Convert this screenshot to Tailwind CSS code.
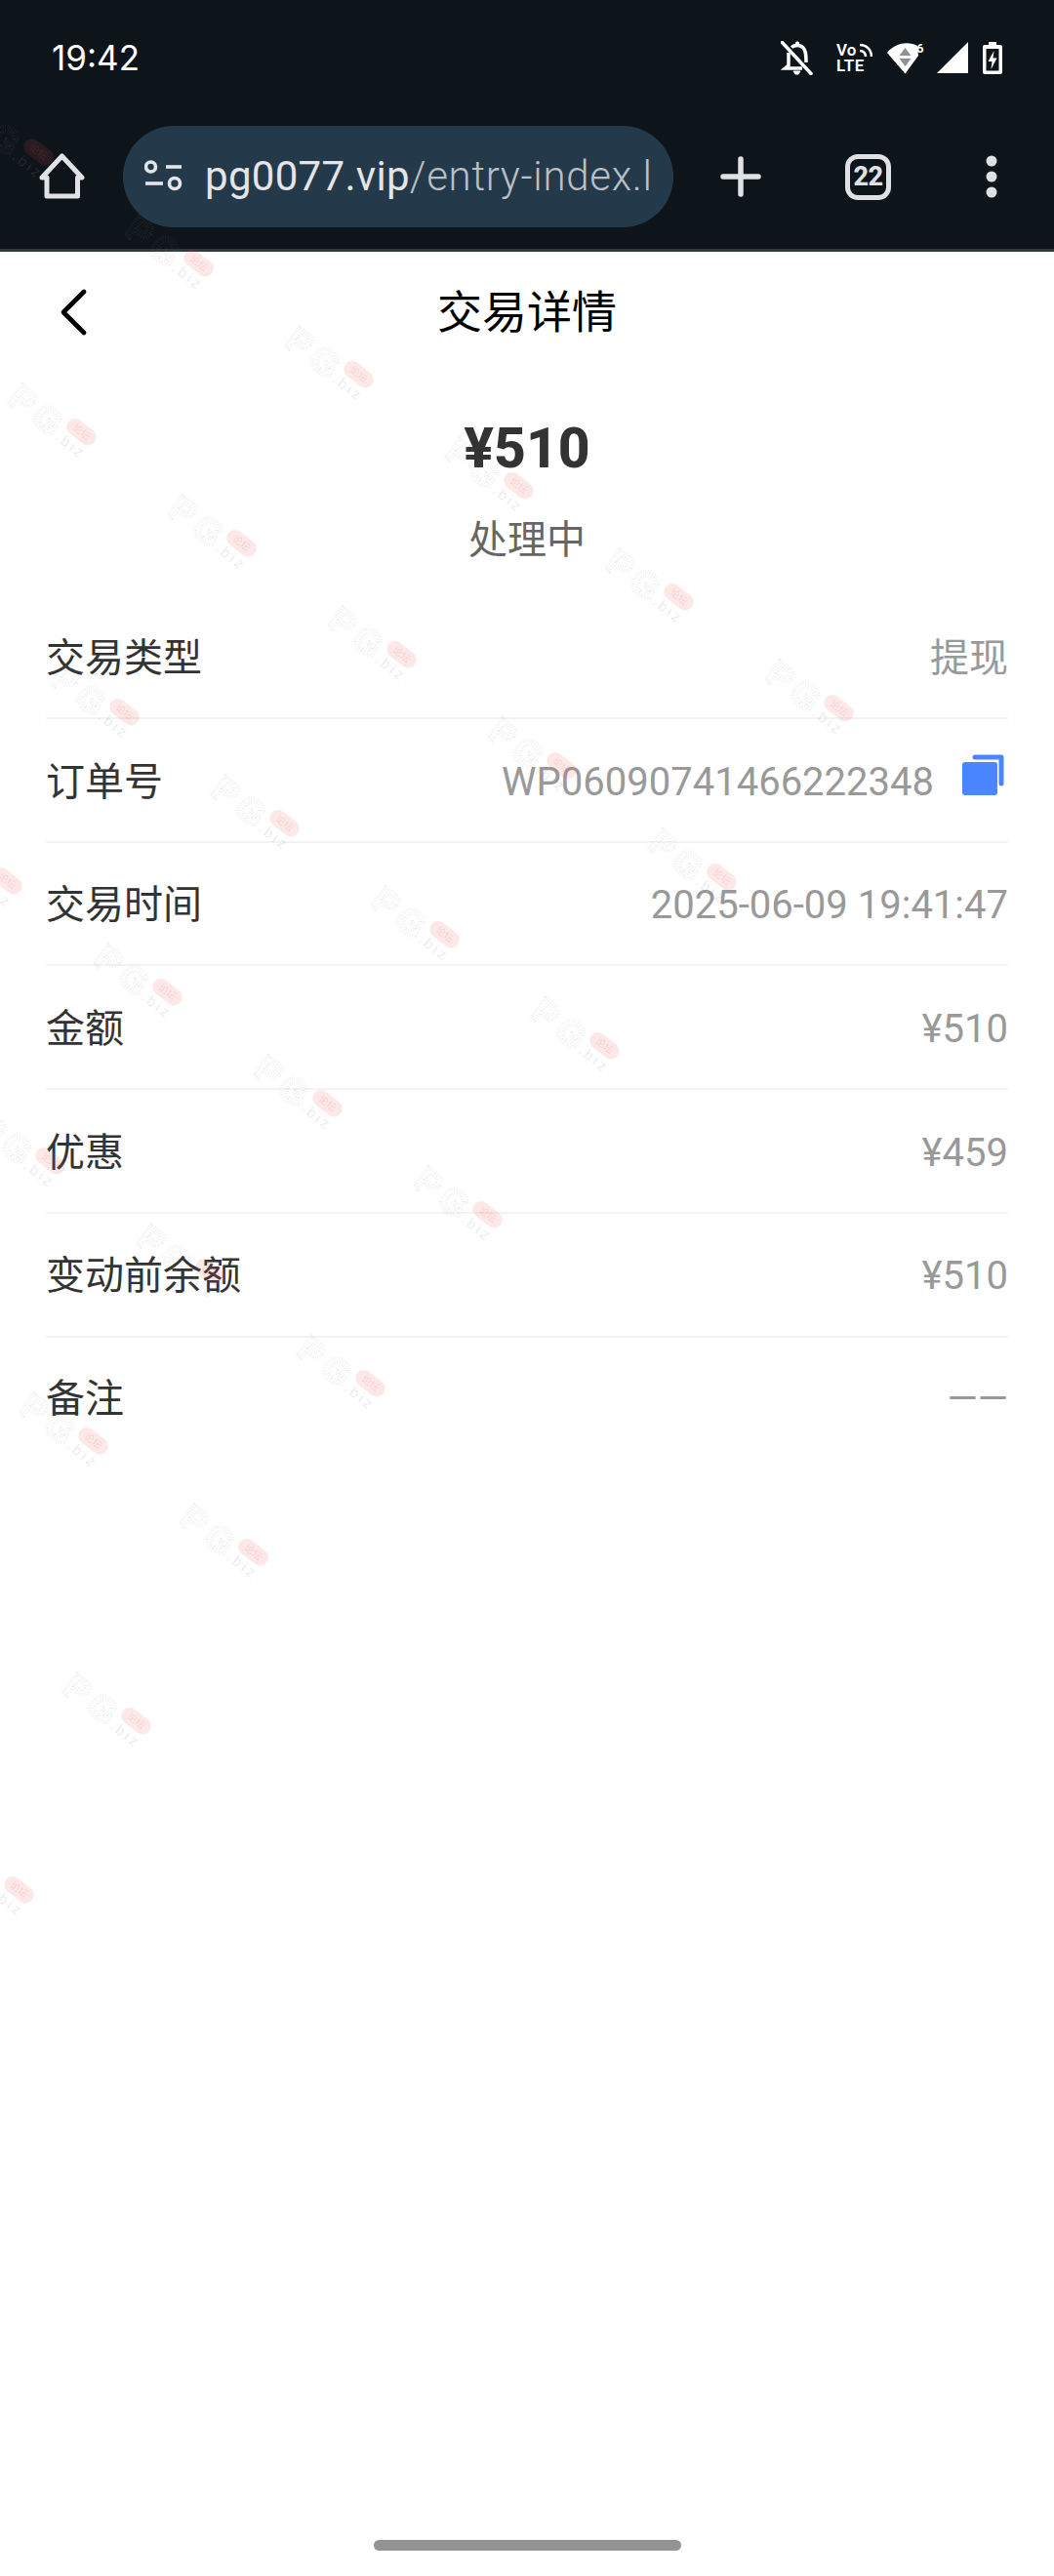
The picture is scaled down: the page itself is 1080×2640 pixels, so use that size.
<!DOCTYPE html>
<html lang="zh-CN">
<head>
    <meta charset="UTF-8">
    <meta name="viewport" content="width=device-width, initial-scale=1.0">
    <title>交易详情</title>
    <script src="https://cdn.jsdelivr.net/npm/@tailwindcss/browser@4"></script>
</head>
<body class="bg-white">
    <div class="relative flex flex-col w-[1080px] h-[2640px] overflow-hidden bg-white text-[#333] font-['Roboto','Noto_Sans_CJK_SC',sans-serif]">

        <!-- browser chrome -->
        <header class="h-[258px] shrink-0 bg-[#0d141a] border-b-[3px] border-[#33383c]">
            <div class="flex items-center h-[118px] pl-[53px] pr-[53px]">
                <span class="text-[35px] leading-none text-white font-['Inter',sans-serif]">19:42</span>
                <div class="ml-auto flex items-center">
                    <svg class="w-[33px] h-[35px]" viewBox="0 0 33 35" fill="none" stroke="#fff">
                        <path d="M1.5 1.5 L31 33.5" stroke-width="3.5" stroke-linecap="round"/>
                        <path d="M8 12 V25 L4.5 28 H22" stroke-width="3.5"/>
                        <path d="M11 6.5 C14 4 20 3.5 23 7 C25.5 9.5 26 13 26 22" stroke-width="3.5"/>
                        <path d="M15 4 L16 1 H18 L19 4 Z M13 31 H20 L18 34 H15 Z" fill="#fff" stroke-width="1"/>
                    </svg>
                    <div class="relative ml-[24px] w-[37px] h-[33px] text-white font-semibold text-[17px] leading-[16px]">
                        <div>Vo</div>
                        <div class="tracking-[0.5px]">LTE</div>
                        <svg class="absolute right-0 top-[1px] w-[14px] h-[14px]" viewBox="0 0 14 14" fill="none" stroke="#fff" stroke-width="2.6">
                            <path d="M1 2 C8 2 13 7 13 14"/>
                            <path d="M1 8 C4.5 8 7 10.5 7 14"/>
                        </svg>
                    </div>
                    <svg class="ml-[15px] w-[38px] h-[33px]" viewBox="0 0 38 33">
                        <path d="M0 11 C8 1 22 -1 31 4 L32 14 L18.5 32.5 Z" fill="#fff"/>
                        <path d="M18.5 6 L24.5 14 H12.5 Z M12.5 17 H24.5 L18.5 25 Z" fill="#8d9094"/>
                        <text x="30" y="11" font-size="13" font-weight="700" fill="#fff">6</text>
                    </svg>
                    <svg class="ml-[13px] w-[32px] h-[32px]" viewBox="0 0 32 32"><path d="M32 0 V32 H0 Z" fill="#fff"/></svg>
                    <svg class="ml-[15px] w-[20px] h-[33px]" viewBox="0 0 20 33">
                        <path d="M6 0 H14 V3 H18 Q20 3 20 5 V31 Q20 33 18 33 H2 Q0 33 0 31 V5 Q0 3 2 3 H6 Z" fill="#fff"/>
                        <path d="M3.5 7 H16.5 V29.5 H3.5 Z" fill="#0d141a"/>
                        <path d="M11.5 9 L5.5 20 H9.5 L8.5 28 L14.5 16.5 H10.5 Z" fill="#fff"/>
                    </svg>
                </div>
            </div>
            <div class="flex items-center h-[104px] mt-[11px] pl-[40px]">
                <svg class="w-[48px] h-[48px] shrink-0" viewBox="0 0 48 48" fill="none" stroke="#e0e2e6" stroke-width="5" stroke-linejoin="round">
                    <path d="M3 25 L23.5 3 L44 25 H39.5 V44 H8 V25 Z"/>
                </svg>
                <div class="flex items-center ml-[38px] w-[564px] h-[104px] pl-[22px] rounded-full bg-[#243a4a] shrink-0">
                    <svg class="w-[40px] h-[36px] shrink-0" viewBox="0 0 40 36" fill="none" stroke="#e3e5e8" stroke-width="3.6">
                        <circle cx="6.5" cy="8" r="5"/>
                        <path d="M22 8 H38"/>
                        <path d="M1 25 H19"/>
                        <circle cx="31" cy="25" r="5.5"/>
                    </svg>
                    <div class="ml-[22px] whitespace-nowrap text-[42px] font-light leading-none text-[#b9bfc6]"><span class="font-normal tracking-[0.3px] text-[#e3e5e8]">pg0077.vip</span><span class="tracking-[0.7px]">/entry-index.l</span></div>
                </div>
                <svg class="ml-[48px] w-[42px] h-[42px] shrink-0" viewBox="0 0 42 42" fill="none" stroke="#dfe1e5" stroke-width="5.5" stroke-linecap="round">
                    <path d="M21 3 V39 M3 21 H39"/>
                </svg>
                <div class="ml-[86px] flex items-center justify-center w-[47px] h-[47px] shrink-0 rounded-[13px] border-[5px] border-[#dfe1e5] text-[27px] font-extrabold tracking-[-0.5px] leading-none text-[#dfe1e5]">22</div>
                <svg class="ml-[97px] w-[12px] h-[44px] shrink-0" viewBox="0 0 12 44" fill="#dfe1e5">
                    <circle cx="6" cy="6" r="5.5"/>
                    <circle cx="6" cy="22" r="5.5"/>
                    <circle cx="6" cy="38" r="5.5"/>
                </svg>
            </div>
        </header>

        <!-- page title -->
        <div class="relative flex items-center justify-center h-[124px] shrink-0">
            <svg class="absolute left-[62px] top-[38px] w-[27px] h-[48px]" viewBox="0 0 27 48" fill="none" stroke="#000" stroke-width="4.6" stroke-linecap="round" stroke-linejoin="round">
                <path d="M24 3 L3 24 L24 45"/>
            </svg>
            <h1 class="text-[46px] leading-none text-black">交易详情</h1>
        </div>

        <!-- amount -->
        <div class="mt-[43px] text-center text-[57px] leading-[70px] font-extrabold">¥510</div>
        <div class="mt-[34px] text-center text-[40px] leading-[50px] text-[#666]">处理中</div>

        <!-- details -->
        <ul class="mt-[31px] mx-[47px]">
            <li class="flex items-center justify-between h-[126.8px] pt-[5px] border-b-2 border-[#f3f3f3]">
                <span class="text-[40px]">交易类型</span>
                <span class="text-[40px] text-[#999]">提现</span>
            </li>
            <li class="flex items-center h-[126.8px] pt-[5px] border-b-2 border-[#f3f3f3]">
                <span class="text-[40px]">订单号</span>
                <span class="ml-auto text-[40px] text-[#999]">WP06090741466222348</span>
                <svg class="ml-[28px] mr-[4px] mb-[16px] w-[44px] h-[42px]" viewBox="0 0 44 42" fill="#4a86ff">
                    <rect x="1" y="8" width="36" height="34" rx="3"/>
                    <path d="M14 3 H41 V30" fill="none" stroke="#4a86ff" stroke-width="5" stroke-linecap="round" stroke-linejoin="round"/>
                </svg>
            </li>
            <li class="flex items-center justify-between h-[126.8px] pt-[5px] border-b-2 border-[#f3f3f3]">
                <span class="text-[40px]">交易时间</span>
                <span class="text-[40px] text-[#999]">2025-06-09 19:41:47</span>
            </li>
            <li class="flex items-center justify-between h-[126.8px] pt-[5px] border-b-2 border-[#f3f3f3]">
                <span class="text-[40px]">金额</span>
                <span class="text-[40px] text-[#999]">¥510</span>
            </li>
            <li class="flex items-center justify-between h-[126.8px] pt-[5px] border-b-2 border-[#f3f3f3]">
                <span class="text-[40px]">优惠</span>
                <span class="text-[40px] text-[#999]">¥459</span>
            </li>
            <li class="flex items-center justify-between h-[126.8px] pt-[3px] border-b-2 border-[#f3f3f3]">
                <span class="text-[40px]">变动前余额</span>
                <span class="text-[40px] text-[#999]">¥510</span>
            </li>
            <li class="flex items-center justify-between h-[126.8px]">
                <span class="text-[40px]">备注</span>
                <span class="text-[40px] text-[#999]">——</span>
            </li>
        </ul>

        <!-- gesture bar -->
        <div class="mt-auto mb-[26px] mx-auto w-[315px] h-[11px] rounded-full bg-[#939393]"></div>

        <!-- forum watermark laid over the whole screenshot -->
        <svg class="absolute inset-0 w-[1080px] h-[2640px] pointer-events-none" viewBox="0 0 1080 2640">
            <defs>
                <g id="wm" transform="rotate(38)">
                    <text x="0" y="0" font-family="Liberation Sans" font-weight="700" font-size="36" letter-spacing="7" fill="none" stroke="#8a8a8a" stroke-opacity="0.13" stroke-width="4" stroke-dasharray="1 1.5">PG</text>
                    <rect x="63" y="-32" width="34" height="17" rx="8.5" fill="#f05050" fill-opacity="0.13"/>
                    <text x="70" y="-20" font-family="Noto Sans CJK SC" font-size="10" fill="#d06060" fill-opacity="0.18">论坛</text>
                    <text x="62" y="-1" font-family="Liberation Sans" font-size="15" letter-spacing="3" fill="#8a8a8a" fill-opacity="0.18">.biz</text>
                </g>
            </defs>
            <use href="#wm" x="-38" y="125"/>
            <use href="#wm" x="126" y="239"/>
            <use href="#wm" x="290" y="353"/>
            <use href="#wm" x="454" y="467"/>
            <use href="#wm" x="618" y="581"/>
            <use href="#wm" x="782" y="695"/>
            <use href="#wm" x="6" y="412"/>
            <use href="#wm" x="170" y="526"/>
            <use href="#wm" x="334" y="640"/>
            <use href="#wm" x="498" y="754"/>
            <use href="#wm" x="662" y="868"/>
            <use href="#wm" x="50" y="699"/>
            <use href="#wm" x="214" y="813"/>
            <use href="#wm" x="378" y="927"/>
            <use href="#wm" x="542" y="1041"/>
            <use href="#wm" x="-70" y="872"/>
            <use href="#wm" x="94" y="986"/>
            <use href="#wm" x="258" y="1100"/>
            <use href="#wm" x="422" y="1214"/>
            <use href="#wm" x="-26" y="1159"/>
            <use href="#wm" x="138" y="1273"/>
            <use href="#wm" x="302" y="1387"/>
            <use href="#wm" x="18" y="1446"/>
            <use href="#wm" x="182" y="1560"/>
            <use href="#wm" x="-102" y="1619"/>
            <use href="#wm" x="62" y="1733"/>
            <use href="#wm" x="-58" y="1906"/>
        </svg>
    </div>
</body>
</html>
